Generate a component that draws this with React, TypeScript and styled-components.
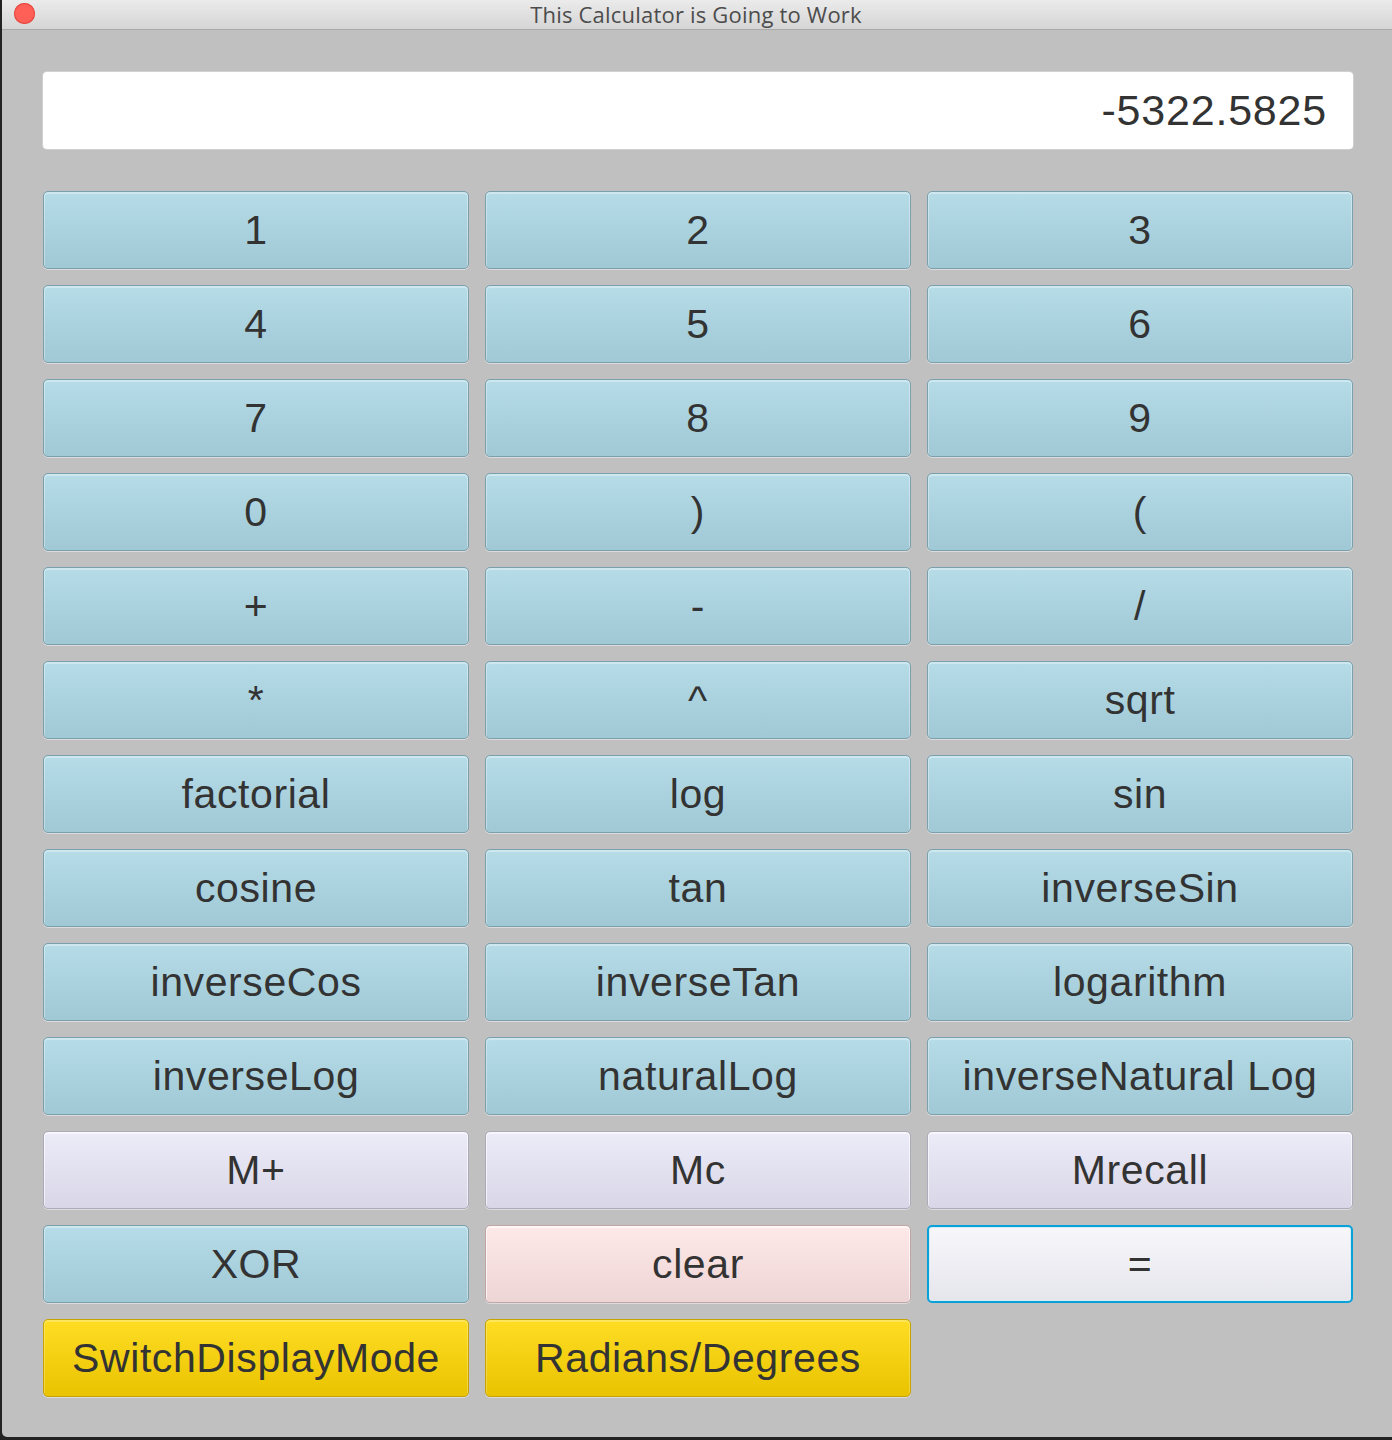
import React from "react";
import styled, { createGlobalStyle, css } from "styled-components";

const Global = createGlobalStyle`
  html, body { margin: 0; padding: 0; }
  body {
    background: #222222;
    width: 1392px;
    height: 1440px;
    overflow: hidden;
    font-family: "Liberation Sans", Arial, sans-serif;
  }
`;

const Window = styled.div`
  margin-left: 2px;
  width: 1390px;
  height: 1437px;
  background: #c0c0c0;
  border-radius: 0 0 0 5px;
  display: flex;
  flex-direction: column;
  overflow: hidden;
`;

const TitleBar = styled.div`
  height: 29px;
  border-bottom: 1px solid #a9a9a9;
  background: linear-gradient(#ebebeb, #d5d5d5);
  display: flex;
  align-items: flex-start;
  justify-content: center;
  position: relative;
`;

const CloseDot = styled.span`
  position: absolute;
  left: 12px;
  top: 3px;
  width: 21px;
  height: 21px;
  border-radius: 50%;
  background: #fe5f57;
  box-shadow: inset 0 0 0 1px #e2463f;
`;

const Title = styled.span`
  font-family: "Open Sans", "Liberation Sans", sans-serif;
  font-size: 22px;
  line-height: 28px;
  color: #4c4c4c;
  letter-spacing: 0.2px;
  margin-left: -2px;
`;

const Content = styled.div`
  padding: 42px 39px 0 41px;
  display: flex;
  flex-direction: column;
  gap: 42px;
`;

const Display = styled.div`
  height: 77px;
  background: #ffffff;
  border-radius: 4px;
  box-shadow: 0 0 0 1px #d0d0d0, 0 1px 1px rgba(0, 0, 0, 0.08);
  display: flex;
  align-items: center;
  justify-content: flex-end;
  padding-right: 26px;
  font-size: 43px;
  color: #333333;
  letter-spacing: 0.8px;
`;

const Grid = styled.div`
  display: grid;
  grid-template-columns: repeat(3, 426px);
  grid-auto-rows: 78px;
  column-gap: 16px;
  row-gap: 16px;
`;

type Variant = "blue" | "lavender" | "pink" | "focus" | "yellow";

const variants: Record<Variant, ReturnType<typeof css>> = {
  blue: css`
    background: linear-gradient(#b5dce7, #a0c8d5);
    border: 1px solid #7ba0ad;
    box-shadow: inset 0 1px 0 1px rgba(255, 255, 255, 0.35), 0 1px 0 #dcdcdc;
  `,
  lavender: css`
    background: linear-gradient(#ecebf8, #d9d7e7);
    border: 1px solid #acaabb;
    box-shadow: inset 0 1px 0 1px rgba(255, 255, 255, 0.6), 0 1px 0 #dcdcdc;
  `,
  pink: css`
    background: linear-gradient(#fee8e8, #eed5d5);
    border: 1px solid #c2a6a6;
    box-shadow: inset 0 1px 0 1px rgba(255, 255, 255, 0.6), 0 1px 0 #dcdcdc;
  `,
  focus: css`
    background: linear-gradient(#f7f7fb, #e5e5ec);
    border: 2px solid #0aa0d8;
    box-shadow: inset 0 0 0 1px #d6eef8;
  `,
  yellow: css`
    background: linear-gradient(#fedd24, #e9c300);
    border: 1px solid #c7a300;
    box-shadow: inset 0 1px 0 1px rgba(255, 255, 255, 0.25), 0 1px 0 #dcdcdc;
  `,
};

const Key = styled.button<{ $variant: Variant }>`
  box-sizing: border-box;
  margin: 0;
  padding: 0;
  border-radius: 5px;
  font-family: "Liberation Sans", Arial, sans-serif;
  font-size: 41px;
  letter-spacing: 0.6px;
  color: #333333;
  display: flex;
  align-items: center;
  justify-content: center;
  cursor: pointer;
  ${(p) => variants[p.$variant]}
`;

const keys: [string, Variant][] = [
  ["1", "blue"], ["2", "blue"], ["3", "blue"],
  ["4", "blue"], ["5", "blue"], ["6", "blue"],
  ["7", "blue"], ["8", "blue"], ["9", "blue"],
  ["0", "blue"], [")", "blue"], ["(", "blue"],
  ["+", "blue"], ["-", "blue"], ["/", "blue"],
  ["*", "blue"], ["^", "blue"], ["sqrt", "blue"],
  ["factorial", "blue"], ["log", "blue"], ["sin", "blue"],
  ["cosine", "blue"], ["tan", "blue"], ["inverseSin", "blue"],
  ["inverseCos", "blue"], ["inverseTan", "blue"], ["logarithm", "blue"],
  ["inverseLog", "blue"], ["naturalLog", "blue"], ["inverseNatural Log", "blue"],
  ["M+", "lavender"], ["Mc", "lavender"], ["Mrecall", "lavender"],
  ["XOR", "blue"], ["clear", "pink"], ["=", "focus"],
  ["SwitchDisplayMode", "yellow"], ["Radians/Degrees", "yellow"],
];

export default function App() {
  return (
    <>
      <Global />
      <Window>
        <TitleBar>
          <CloseDot />
          <Title>This Calculator is Going to Work</Title>
        </TitleBar>
        <Content>
          <Display>-5322.5825</Display>
          <Grid>
            {keys.map(([label, v]) => (
              <Key key={label} $variant={v}>
                {label}
              </Key>
            ))}
          </Grid>
        </Content>
      </Window>
    </>
  );
}
